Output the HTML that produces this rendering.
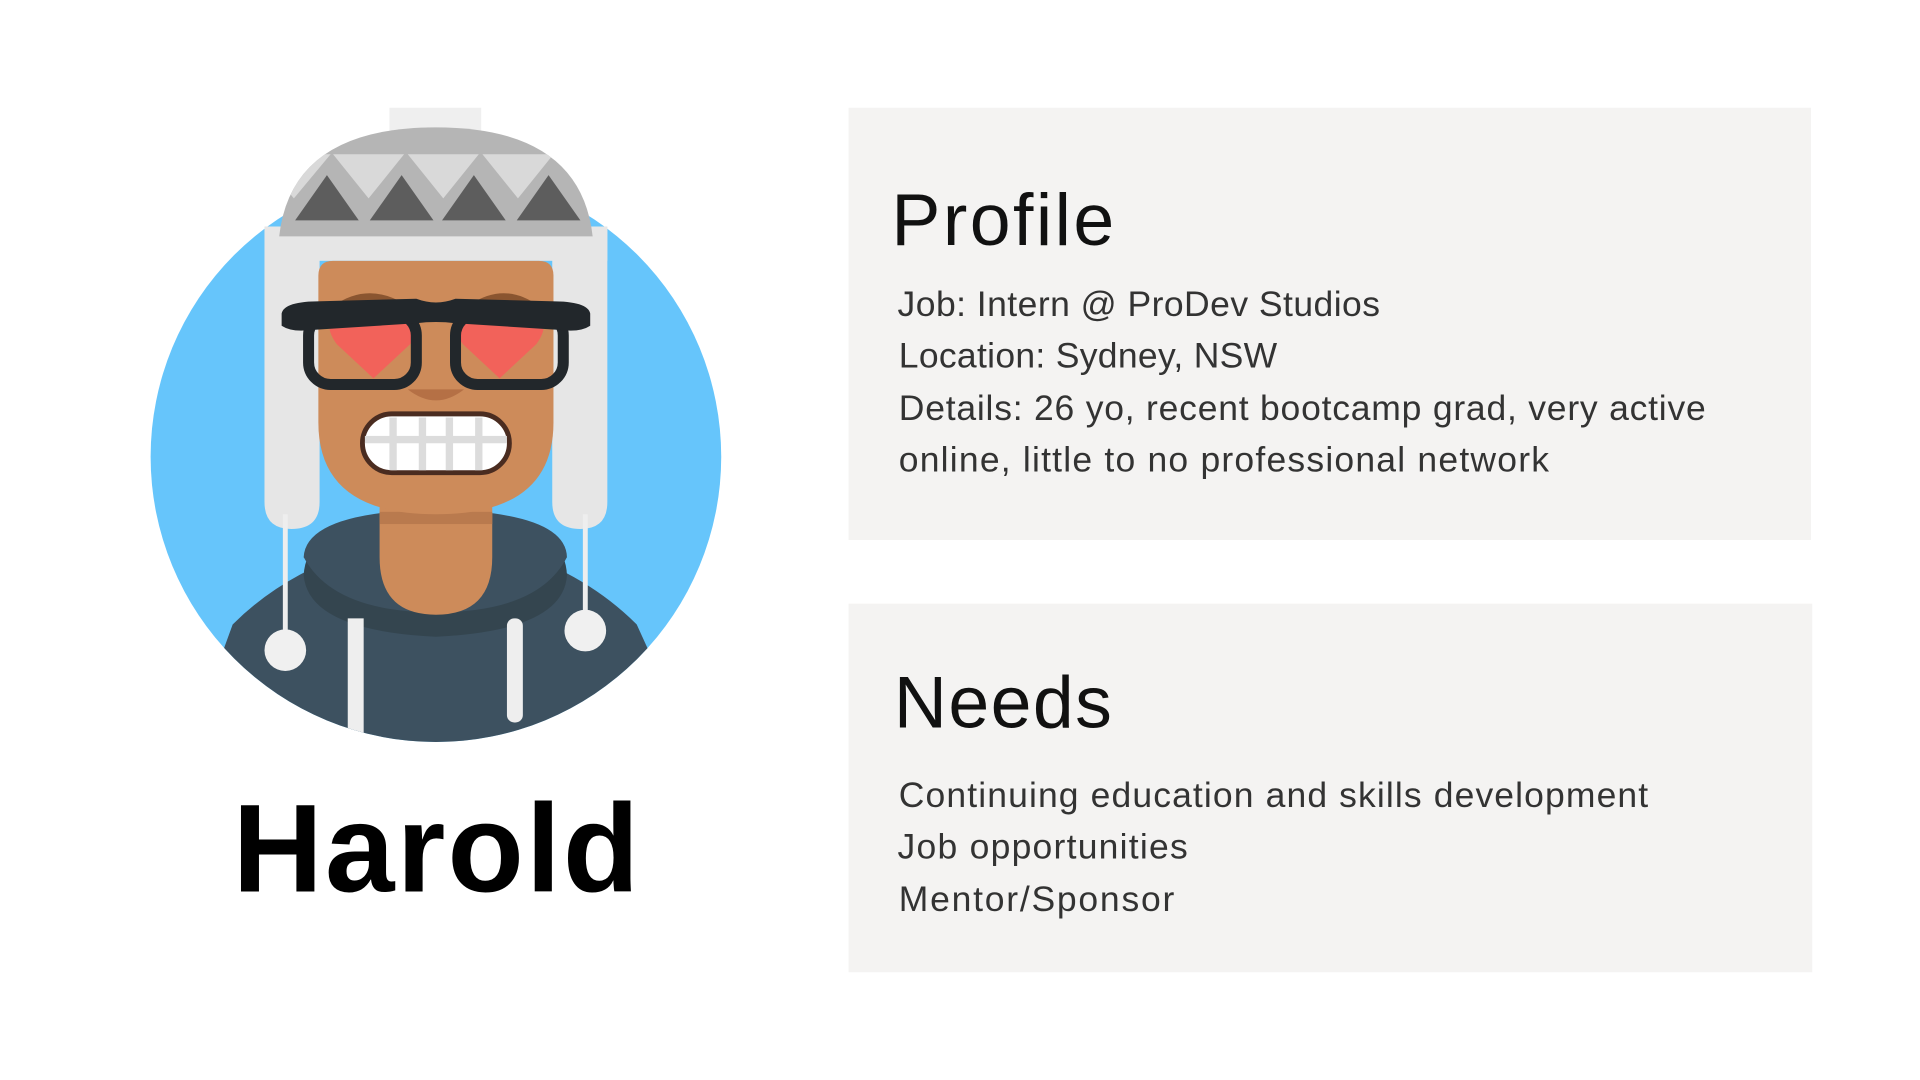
<!DOCTYPE html>
<html><head><meta charset="utf-8"><style>
html,body{margin:0;padding:0;background:#fff;}
svg{display:block;}
text{font-family:"Liberation Sans",sans-serif;}
</style></head><body>
<svg width="1920" height="1080" viewBox="0 0 1568 882" preserveAspectRatio="none" xmlns="http://www.w3.org/2000/svg">
<rect width="1568" height="882" fill="#fff"/>
<rect x="693" y="88" width="786" height="353" fill="#f4f3f2"/>
<rect x="693" y="493" width="787" height="301" fill="#f4f3f2"/>
<g fill="#111">
<text x="728" y="200" font-size="60" textLength="182">Profile</text>
<text x="730" y="594" font-size="60" textLength="178">Needs</text>
</g>
<g fill="#333" font-size="29">
<text x="733" y="258" textLength="394">Job: Intern @ ProDev Studios</text>
<text x="734" y="300" textLength="309">Location: Sydney, NSW</text>
<text x="734" y="343" textLength="659">Details: 26 yo, recent bootcamp grad, very active</text>
<text x="734" y="385" textLength="531">online, little to no professional network</text>
<text x="734" y="659" textLength="612">Continuing education and skills development</text>
<text x="733" y="701" textLength="237">Job opportunities</text>
<text x="734" y="744" textLength="225">Mentor/Sponsor</text>
</g>
<text x="356" y="728" font-size="102" font-weight="bold" fill="#000" text-anchor="middle" textLength="332">Harold</text>

<defs><clipPath id="c"><circle cx="356" cy="373" r="233"/></clipPath>
<clipPath id="h"><path d="M228 193 Q238 104 356 104 Q474 104 484 193 Z"/></clipPath></defs>
<circle cx="356" cy="373" r="233" fill="#66c5fb"/>
<g clip-path="url(#c)">
  <path d="M150 620 L190 510 Q230 470 290 450 L420 450 Q480 470 520 510 L570 620 Z" fill="#3d5160"/>
  <path d="M248 470 Q250 420 356 418 Q462 420 463 470 Q460 515 356 520 Q252 515 248 470Z" fill="#34454f"/>
  <path d="M248 455 Q250 418 356 416 Q462 418 463 455 Q440 500 356 500 Q272 500 248 455Z" fill="#3d5160"/>
  <rect x="284" y="505" width="13" height="110" fill="#eeeeee"/>
  <rect x="414" y="505" width="13" height="85" rx="6" fill="#eeeeee"/>
</g>
<path d="M310 380 L402 380 L402 455 Q402 502 356 502 Q310 502 310 455 Z" fill="#cd8b5a"/>
<rect x="310" y="418" width="92" height="10" fill="#b97a4e"/>
<rect x="318" y="88" width="75" height="20" fill="#efefef"/>
<path d="M216 185 L261 185 L261 410 Q261 432 238 432 Q216 432 216 410Z" fill="#e6e6e6"/>
<path d="M451 185 L496 185 L496 410 Q496 432 474 432 Q451 432 451 410Z" fill="#e6e6e6"/>
<rect x="216" y="185" width="280" height="28" fill="#e6e6e6"/>
<path d="M228 193 Q238 104 356 104 Q474 104 484 193 Z" fill="#b5b5b5"/>
<g clip-path="url(#h)">
<g fill="#d9d9d9">
<path d="M210 126 L270 126 L240 162Z"/>
<path d="M272 126 L330 126 L301 162Z"/>
<path d="M333 126 L391 126 L362 162Z"/>
<path d="M394 126 L452 126 L423 162Z"/>
<path d="M455 126 L513 126 L484 162Z"/>
</g>
<g fill="#5d5d5d">
<path d="M241 180 L267 143 L293 180Z"/>
<path d="M302 180 L328 143 L354 180Z"/>
<path d="M361 180 L387 143 L413 180Z"/>
<path d="M422 180 L448 143 L474 180Z"/>
</g>
</g>
<rect x="231" y="420" width="4" height="100" fill="#eee"/>
<rect x="476" y="420" width="4" height="90" fill="#eee"/>
<circle cx="233" cy="531" r="17" fill="#f0f0f0"/>
<circle cx="478" cy="515" r="17" fill="#f0f0f0"/>
<path d="M260 225 Q260 213 272 213 L440 213 Q452 213 452 225 L452 345 Q452 420 356 420 Q260 420 260 345 Z" fill="#cd8b5a"/>
<path d="M272 250 Q300 230 330 248 Z" fill="#8a5530"/>
<path d="M385 248 Q413 230 440 250 Z" fill="#8a5530"/>
<path d="M305 309 L275 281 Q264 266 273 257 Q289 245 305 262 Q321 245 337 257 Q346 266 335 281Z" fill="#f2625a"/>
<path d="M408 309 L378 281 Q367 266 376 257 Q392 245 408 262 Q424 245 440 257 Q449 266 438 281Z" fill="#f2625a"/>
<g fill="none" stroke="#22272b" stroke-width="9">
<rect x="252" y="256" width="88" height="58" rx="18"/>
<rect x="372" y="256" width="88" height="58" rx="18"/>
</g>
<path d="M230 256 Q232 246 262 246 L340 244 Q356 250 372 244 L450 246 Q480 246 482 256 L482 266 Q476 270 466 270 L372 264 Q356 262 340 264 L246 270 Q236 270 230 266Z" fill="#22272b"/>
<path d="M333 318 Q356 336 379 318 Z" fill="#b57045"/>
<rect x="296" y="338" width="120" height="48" rx="24" fill="#fff" stroke="#4a2c20" stroke-width="4"/>
<g fill="#dcdcdc">
<rect x="298" y="356" width="116" height="6"/>
<rect x="318" y="341" width="6" height="43"/>
<rect x="342" y="341" width="6" height="43"/>
<rect x="364" y="341" width="6" height="43"/>
<rect x="388" y="341" width="6" height="43"/>
</g>
</svg>
</body></html>
